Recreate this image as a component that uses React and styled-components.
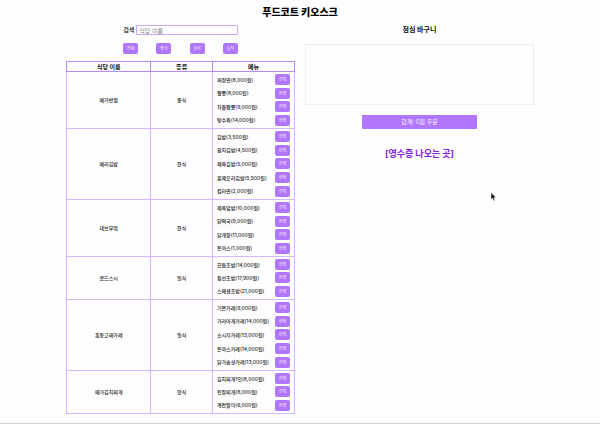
import React, { useState } from "react";
import styled, { createGlobalStyle } from "styled-components";

const colors = {
  primary: "#b076fb",
  line: "#d6b6fc",
  headLine: "#b98af0",
  receipt: "#8420e0",
  text: "#111111",
  cellText: "#2a2a2a",
  box: "#eeeeee",
};

const categories = ["전체", "중식", "한식", "일식"];

const restaurants = [
  {
    name: "메가반점",
    category: "중식",
    menu: [
      ["짜장면", 8000],
      ["짬뽕", 8000],
      ["차돌짬뽕", 9000],
      ["탕수육", 14000],
    ],
  },
  {
    name: "메리김밥",
    category: "한식",
    menu: [
      ["김밥", 3500],
      ["참치김밥", 4500],
      ["제육김밥", 5000],
      ["훈제오리김밥", 5500],
      ["컵라면", 2000],
    ],
  },
  {
    name: "데브부엌",
    category: "한식",
    menu: [
      ["제육덮밥", 10000],
      ["닭떡국", 9000],
      ["닭개장", 11000],
      ["돈까스", 1000],
    ],
  },
  {
    name: "로드스시",
    category: "일식",
    menu: [
      ["모듬초밥", 14000],
      ["특선초밥", 17900],
      ["스페셜초밥", 21000],
    ],
  },
  {
    name: "혹등고래카레",
    category: "일식",
    menu: [
      ["기본카레", 9000],
      ["가라아게카레", 14000],
      ["소시지카레", 13000],
      ["돈까스카레", 14000],
      ["닭가슴살카레", 13000],
    ],
  },
  {
    name: "메가김치찌개",
    category: "한식",
    menu: [
      ["김치찌개1인", 8000],
      ["된장찌개", 8000],
      ["계란말이", 6000],
    ],
  },
];

const GlobalStyle = createGlobalStyle`
  * {
    box-sizing: border-box;
    margin: 0;
    padding: 0;
  }

  body {
    background: #fdfdfd;
    color: ${colors.text};
    font-family: Inter, "Noto Sans CJK KR", sans-serif;
    font-size: 6px;
    line-height: 8px;
  }

  button,
  input {
    font-family: inherit;
  }
`;

const Page = styled.div`
  min-height: 100vh;
  padding-top: 4px;
  border-bottom: 1px solid #d2d2d2;
`;

const Title = styled.h1`
  color: #000;
  font-size: 10px;
  font-weight: 900;
  line-height: 16px;
  text-align: center;
`;

const Columns = styled.main`
  display: grid;
  grid-template-columns: 1fr 1fr;
  gap: 10px;
  width: 78%;
  margin: 4px auto 0;
`;

const Finder = styled.div`
  width: 50%;
  margin: 0 auto 7px;
`;

const SearchRow = styled.div`
  display: flex;
  align-items: center;
  gap: 2px;
  height: 12px;
`;

const SearchLabel = styled.label`
  flex: none;
  font-size: 6px;
  font-weight: 500;
`;

const SearchInput = styled.input`
  flex: 1;
  min-width: 0;
  height: 10px;
  padding: 0 2px;
  border: 1px solid #cda6fc;
  border-radius: 1px;
  background: #fff;
  color: ${colors.text};
  font-size: 6px;
  line-height: 8px;
  outline: none;

  &::placeholder {
    color: #858585;
  }
`;

const Filters = styled.div`
  display: flex;
  justify-content: space-between;
  margin-top: 7px;
`;

const SmallButton = styled.button`
  flex: none;
  width: 15px;
  height: 11px;
  border: 0;
  border-radius: 2px;
  background: ${colors.primary};
  color: #f8f0ff;
  font-size: 4px;
  line-height: 11px;
  text-align: center;
  cursor: pointer;
`;

const Table = styled.table`
  width: 100%;
  border-collapse: collapse;
  table-layout: fixed;
  text-align: center;
`;

const HeadCell = styled.th`
  width: ${(props) => props.$width};
  height: 10px;
  border: 1px solid ${colors.headLine};
  font-size: 6px;
  font-weight: 700;
`;

const Cell = styled.td`
  border: 1px solid ${colors.line};
  color: ${colors.cellText};
  font-size: 5px;
  font-weight: 500;
  vertical-align: middle;
`;

const MenuList = styled.ul`
  display: grid;
  grid-auto-rows: 1fr;
  height: ${(props) => props.$count * 14 - 2}px;
  margin: 1px 4px;
  list-style: none;
`;

const MenuItem = styled.li`
  display: flex;
  align-items: center;
  justify-content: space-between;
  white-space: nowrap;
`;

const Side = styled.section`
  display: flex;
  flex-direction: column;
  align-items: center;
`;

const SideTitle = styled.h2`
  font-size: 7px;
  font-weight: 700;
  line-height: 12px;
`;

const Basket = styled.div`
  width: 100%;
  height: 61px;
  margin-top: 8px;
  border: 1px solid ${colors.box};
`;

const OrderButton = styled.button`
  width: 50%;
  height: 14px;
  margin-top: 10px;
  border: 0;
  border-radius: 1px;
  background: ${colors.primary};
  color: #f8f0ff;
  font-size: 6px;
  line-height: 14px;
  cursor: pointer;
`;

const Receipt = styled.h2`
  margin-top: 18px;
  color: ${colors.receipt};
  font-size: 9px;
  font-weight: 700;
  line-height: 14px;
`;

const Pointer = styled.svg`
  position: absolute;
  left: 490px;
  top: 192px;
  pointer-events: none;
`;

const RestaurantRow = ({ name, category, menu }) => (
  <tr>
    <Cell>{name}</Cell>
    <Cell>{category}</Cell>
    <Cell>
      <MenuList $count={menu.length}>
        {menu.map(([dish, price]) => (
          <MenuItem key={dish}>
            <span>{`${dish}(${price.toLocaleString("en-US")}원)`}</span>
            <SmallButton type="button">선택</SmallButton>
          </MenuItem>
        ))}
      </MenuList>
    </Cell>
  </tr>
);

const App = () => {
  const [query, setQuery] = useState("");
  const [filter, setFilter] = useState("전체");

  const visible = restaurants.filter(
    (item) =>
      item.name.includes(query.trim()) &&
      (filter === "전체" || item.category === filter)
  );

  return (
    <Page lang="ko">
      <GlobalStyle />
      <Title>푸드코트 키오스크</Title>
      <Columns>
        <section>
          <Finder>
            <SearchRow>
              <SearchLabel htmlFor="search">검색</SearchLabel>
              <SearchInput
                id="search"
                type="text"
                placeholder="식당 이름"
                value={query}
                onChange={(e) => setQuery(e.target.value)}
              />
            </SearchRow>
            <Filters>
              {categories.map((category) => (
                <SmallButton
                  key={category}
                  type="button"
                  onClick={() => setFilter(category)}
                >
                  {category}
                </SmallButton>
              ))}
            </Filters>
          </Finder>
          <Table>
            <thead>
              <tr>
                <HeadCell $width="37%">식당 이름</HeadCell>
                <HeadCell $width="27%">종류</HeadCell>
                <HeadCell $width="36%">메뉴</HeadCell>
              </tr>
            </thead>
            <tbody>
              {visible.map((item) => (
                <RestaurantRow key={item.name} {...item} />
              ))}
            </tbody>
          </Table>
        </section>
        <Side>
          <SideTitle>점심 바구니</SideTitle>
          <Basket />
          <OrderButton type="button">합계: 0원 주문</OrderButton>
          <Receipt>[영수증 나오는 곳]</Receipt>
        </Side>
      </Columns>
      <Pointer width="6" height="10" viewBox="0 0 12 20" aria-hidden="true">
        <path
          d="M2 1v14l3-3 3 6 2-1-2-6h4z"
          fill="#111"
          stroke="#fff"
          strokeWidth="1"
        />
      </Pointer>
    </Page>
  );
};

export default App;
